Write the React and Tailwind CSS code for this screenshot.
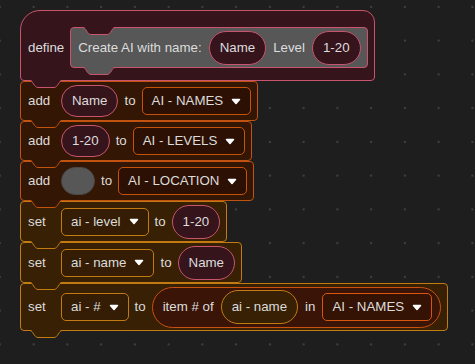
import React from "react";

const MAROON = "#36141c";
const PINK = "#c8546d";

function Tab({ fill, stroke, className }) {
  return (
    <svg
      width="34"
      height="9"
      viewBox="0 0 34 9"
      className={"absolute z-10 " + className}
    >
      <path d="M0 0 C3 0 4 7.5 8 7.5 H24 C28 7.5 29 0 32 0 Z" fill={fill} />
      <path
        d="M0 0.5 C3 0.5 4 7.5 8 7.5 H24 C28 7.5 29 0.5 32 0.5"
        fill="none"
        stroke={stroke}
      />
    </svg>
  );
}

function Arrow() {
  return (
    <svg width="10" height="7" viewBox="0 0 10 7">
      <path
        d="M1.5 1.5 H8.5 L5 5.5 Z"
        fill="#ffffff"
        stroke="#ffffff"
        strokeWidth="1.5"
        strokeLinejoin="round"
      />
    </svg>
  );
}

function Pill({ children, tall }) {
  return (
    <span
      className={
        "flex items-center rounded-full border border-[#c8546d] bg-[#36141c] px-[10px] " +
        (tall ? "h-[34px]" : "h-[32px]")
      }
    >
      {children}
    </span>
  );
}

function Dropdown({ children, className }) {
  return (
    <span
      className={
        "flex h-[28px] items-center gap-[8px] rounded-[5px] border pl-[9px] pr-[9px] " +
        className
      }
    >
      {children}
      <Arrow />
    </span>
  );
}

function AddBlock({ children }) {
  return (
    <div className="relative flex h-[40px] items-center gap-[6px] rounded-[4px] border border-[#c2520f] bg-[#341604] pl-[7px] pr-[6px]">
      <span className="w-[27px]">add</span>
      {children}
      <Tab fill="#341604" stroke="#c2520f" className="left-[9px] top-full" />
    </div>
  );
}

function SetBlock({ children, tall }) {
  return (
    <div
      className={
        "relative flex items-center gap-[6px] rounded-[4px] border border-[#c27b13] bg-[#382005] pl-[7px] pr-[6px] " +
        (tall ? "h-[48px]" : "h-[41px]")
      }
    >
      <span className="w-[27px]">set</span>
      {children}
      <Tab fill="#382005" stroke="#c27b13" className="left-[9px] top-full" />
    </div>
  );
}

const addDrop = "border-[#c4530c] bg-[#2c1003]";
const setDrop = "border-[#c27b13] bg-[#341d04]";

export default function App() {
  return (
    <div className="h-[364px] w-full overflow-hidden bg-[#1e1e1e] bg-[radial-gradient(circle,#404040_1px,transparent_1.5px)] bg-[size:33.75px_33.75px] bg-[position:-17px_-10px] font-['Liberation_Sans',Arial,sans-serif] text-[13.3px] text-[#dcdcdc]">
      <div className="flex flex-col items-start pl-[20px] pt-[10px]">
        {/* hat block */}
        <div className="relative flex items-center gap-[6px] rounded-tl-[20px] rounded-tr-[12px] rounded-b-[4px] border border-[#c8546d] bg-[#36141c] pb-[12px] pl-[7px] pr-[6px] pt-[16px]">
          <span>define</span>
          <div className="relative flex h-[41px] items-center gap-[7px] rounded-[4px] border border-[#c8546d] bg-[#575757] pl-[7px] pr-[6px]">
            <Tab fill={MAROON} stroke={PINK} className="left-[12px] top-[-1px]" />
            <span>Create AI with name:</span>
            <Pill tall>Name</Pill>
            <span>Level</span>
            <Pill tall>1-20</Pill>
            <Tab fill="#575757" stroke={PINK} className="left-[12px] top-full" />
          </div>
          <Tab fill={MAROON} stroke={PINK} className="left-[9px] top-full" />
        </div>

        <AddBlock>
          <Pill>Name</Pill>
          <span>to</span>
          <Dropdown className={addDrop}>AI - NAMES</Dropdown>
        </AddBlock>
        <AddBlock>
          <Pill>1-20</Pill>
          <span>to</span>
          <Dropdown className={addDrop}>AI - LEVELS</Dropdown>
        </AddBlock>
        <AddBlock>
          <span className="h-[28px] w-[34px] rounded-full border border-[#484848] bg-[#575757]" />
          <span>to</span>
          <Dropdown className={addDrop}>AI - LOCATION</Dropdown>
        </AddBlock>

        <SetBlock>
          <Dropdown className={setDrop}>ai - level</Dropdown>
          <span>to</span>
          <Pill tall>1-20</Pill>
        </SetBlock>
        <SetBlock>
          <Dropdown className={setDrop}>ai - name</Dropdown>
          <span>to</span>
          <Pill tall>Name</Pill>
        </SetBlock>
        <SetBlock tall>
          <Dropdown className={setDrop}>ai - #</Dropdown>
          <span>to</span>
          <span className="flex h-[41px] items-center gap-[7px] rounded-full border border-[#c9520e] bg-[#3a1406] pl-[10px] pr-[8px]">
            <span>item # of</span>
            <span className="flex h-[34px] items-center rounded-full border border-[#c27b13] bg-[#382005] px-[10px]">
              ai - name
            </span>
            <span>in</span>
            <Dropdown className="border-[#d9560f] bg-[#341204]">AI - NAMES</Dropdown>
          </span>
        </SetBlock>
      </div>
    </div>
  );
}
